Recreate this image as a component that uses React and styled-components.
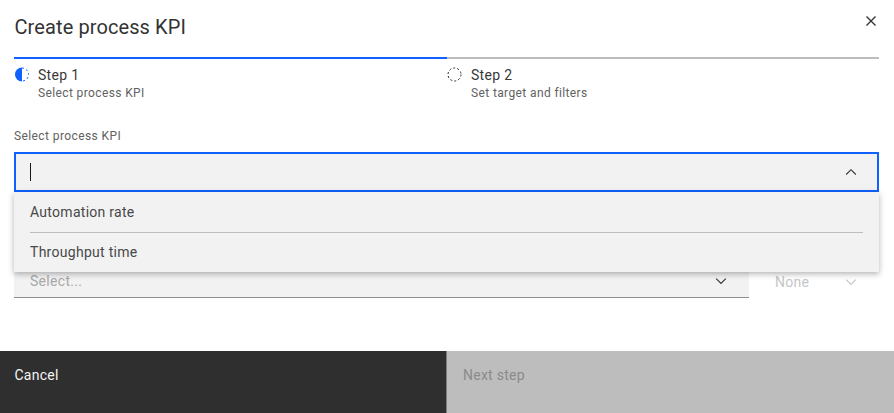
import React from 'react';
import styled, { createGlobalStyle } from 'styled-components';

const Global = createGlobalStyle`
  html, body { margin: 0; padding: 0; background: #fff; }
  body { font-family: Roboto, "Liberation Sans", sans-serif; }
  * { box-sizing: border-box; }
`;

const Modal = styled.div`
  width: 894px;
  height: 413px;
  display: flex;
  flex-direction: column;
  overflow: hidden;
  background: #fff;
  color: #161616;
`;

const Header = styled.header`
  height: 57px;
  padding: 14px 15px 0 14.5px;
  display: flex;
  justify-content: space-between;
  align-items: flex-start;
`;

const Title = styled.h2`
  margin: 0;
  font-size: 20px;
  line-height: 26px;
  font-weight: 400;
  letter-spacing: 0.1px;
  color: #333;
`;

const Close = styled.button`
  border: 0;
  padding: 0;
  background: none;
  width: 16px;
  height: 16px;
  margin-top: -1px;
  display: flex;
  color: #333;
`;

const Steps = styled.ol`
  list-style: none;
  margin: 0;
  padding: 0 15px 0 14px;
  display: grid;
  grid-template-columns: 433px 432px;
`;

const Step = styled.li`
  border-top: 2px solid ${p => (p.$active ? '#0f62fe' : '#bdbdbd')};
  padding-top: 8px;
  display: flex;
  gap: ${p => (p.$active ? '8px' : '9px')};
`;

const StepIcon = styled.svg`
  width: 15px;
  height: 15px;
  flex: none;
  margin-top: 0;
  margin-left: ${p => (p.$active ? '1px' : '0')};
`;

const StepText = styled.div`
  display: flex;
  flex-direction: column;
`;

const StepName = styled.span`
  font-size: 14px;
  line-height: 16px;
  letter-spacing: 0.3px;
  color: #393939;
`;

const StepSub = styled.span`
  font-size: 12px;
  line-height: 20px;
  letter-spacing: 0.38px;
  color: #626262;
`;

const Body = styled.div`
  flex: 1;
  padding: 25px 15px 0 14px;
  display: flex;
  flex-direction: column;
`;

const Label = styled.label`
  font-size: 12px;
  line-height: 16px;
  letter-spacing: 0.4px;
  color: #626262;
  margin-bottom: 8px;
`;

const Combo = styled.div`
  position: relative;
  z-index: 2;
`;

const ComboField = styled.div`
  height: 40px;
  border: 2px solid #0f62fe;
  background: #f2f2f2;
  padding: 0 18px 0 14px;
  display: flex;
  align-items: center;
  justify-content: space-between;
`;

const Caret = styled.span`
  width: 1px;
  height: 18px;
  background: #161616;
`;

const Menu = styled.ul`
  position: absolute;
  left: 0;
  right: 0;
  top: 40px;
  margin: 0;
  padding: 0 16px;
  list-style: none;
  background: #f2f2f2;
  box-shadow: 0 2px 6px rgba(0, 0, 0, 0.3);
`;

const MenuItem = styled.li`
  height: 40px;
  display: flex;
  align-items: center;
  font-size: 14px;
  letter-spacing: 0.28px;
  color: #484848;
  & + & {
    border-top: 1px solid #bdbdbd;
    padding-bottom: 1px;
  }
`;

const FilterRow = styled.div`
  margin-top: 73px;
  display: flex;
`;

const GhostSelect = styled.div`
  width: 735px;
  height: 33px;
  background: #f2f2f2;
  border-bottom: 1px solid #8d8d8d;
  padding: 0 20px 0 16px;
  display: flex;
  align-items: center;
  justify-content: space-between;
  font-size: 14px;
  letter-spacing: 0.3px;
  color: #a8a8a8;
`;

const NoneSelect = styled.div`
  flex: 1;
  height: 33px;
  padding: 1px 20px 0 26px;
  display: flex;
  align-items: center;
  justify-content: space-between;
  font-size: 14px;
  letter-spacing: 0.3px;
  color: #c6c6c6;
`;

const Footer = styled.footer`
  height: 62px;
  display: grid;
  grid-template-columns: 447px 447px;
`;

const FooterButton = styled.button`
  border: 0;
  margin: 0;
  padding: 0 14px 14px ${p => (p.$primary ? '16px' : '14.5px')};
  text-align: left;
  font-family: inherit;
  font-size: 14px;
  letter-spacing: 0.25px;
  background: ${p => (p.$primary ? '#bdbdbd' : '#2f2f2f')};
  color: ${p => (p.$primary ? '#8a8a8a' : '#f4f4f4')};
  border-right: ${p => (p.$primary ? '0' : '1px solid #7c7c7c')};
`;

const Chevron = ({ up, color = '#333' }) => (
  <svg width="16" height="16" viewBox="0 0 16 16" fill="none" stroke={color} strokeWidth="1.1">
    <path d={up ? 'M3.2 10.5 8 5.7l4.8 4.8' : 'M3.2 5.7 8 10.5l4.8-4.8'} />
  </svg>
);

export default function App() {
  return (
    <Modal>
      <Global />
      <Header>
        <Title>Create process KPI</Title>
        <Close aria-label="Close">
          <svg width="16" height="16" viewBox="0 0 16 16" fill="none" stroke="currentColor" strokeWidth="1.4">
            <path d="M3.5 3.5l9 9M12.5 3.5l-9 9" />
          </svg>
        </Close>
      </Header>
      <Steps>
        <Step $active>
          <StepIcon $active viewBox="0 0 15 15">
            <path d="M7 .5a7 7 0 0 0 0 14z" fill="#0f62fe" />
            <path
              d="M7 1a6.5 6.5 0 0 1 0 13"
              fill="none"
              stroke="#0f62fe"
              strokeWidth="1"
              strokeDasharray="2 2.2"
            />
          </StepIcon>
          <StepText>
            <StepName>Step 1</StepName>
            <StepSub>Select process KPI</StepSub>
          </StepText>
        </Step>
        <Step>
          <StepIcon viewBox="0 0 15 15">
            <circle cx="7.5" cy="7.5" r="6.5" fill="none" stroke="#262626" strokeWidth="1" strokeDasharray="2 2.08" />
          </StepIcon>
          <StepText>
            <StepName>Step 2</StepName>
            <StepSub>Set target and filters</StepSub>
          </StepText>
        </Step>
      </Steps>
      <Body>
        <Label>Select process KPI</Label>
        <Combo>
          <ComboField>
            <Caret />
            <Chevron up />
          </ComboField>
          <Menu>
            <MenuItem>Automation rate</MenuItem>
            <MenuItem>Throughput time</MenuItem>
          </Menu>
        </Combo>
        <FilterRow>
          <GhostSelect>
            Select...
            <Chevron />
          </GhostSelect>
          <NoneSelect>
            None
            <Chevron color="#c6c6c6" />
          </NoneSelect>
        </FilterRow>
      </Body>
      <Footer>
        <FooterButton>Cancel</FooterButton>
        <FooterButton $primary>Next step</FooterButton>
      </Footer>
    </Modal>
  );
}
